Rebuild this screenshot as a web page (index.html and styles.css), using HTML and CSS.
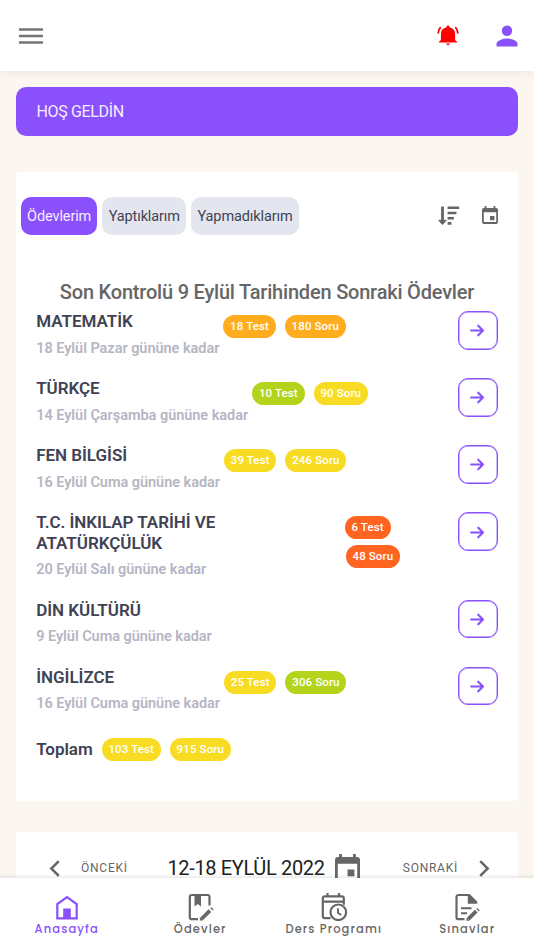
FILE: index.html
```html
<!DOCTYPE html>
<html lang="tr">
<head>
<meta charset="utf-8">
<meta name="viewport" content="width=device-width, initial-scale=1">
<title>Ödevler</title>
<link rel="stylesheet" href="styles.css">
</head>
<body>
<svg class="defs" aria-hidden="true">
  <symbol id="arrow" viewBox="0 0 16 14"><path d="M1.200 7h12.600M8.800 1.800 13.900 7l-5.100 5.200" fill="none" stroke="currentColor" stroke-width="2.300" stroke-linecap="round" stroke-linejoin="round"/></symbol>
  <symbol id="event" viewBox="3 1 18 20"><path d="M17 12h-5v5h5v-5zM16 1v2H8V1H6v2H5c-1.110 0-1.990.9-1.990 2L3 19a2 2 0 0 0 2 2h14c1.100 0 2-.9 2-2V5c0-1.100-.9-2-2-2h-1V1h-2zm3 18H5V8h14v11z" fill="currentColor"/></symbol>
</svg>
<div class="app">
  <header class="topbar">
    <svg class="menu" viewBox="0 0 24 16"><path d="M0 1.500h24M0 8h24M0 14.500h24" stroke="currentColor" stroke-width="2.700"/></svg>
    <div class="topbar-actions">
      <svg class="bell" viewBox="0 0 22 21"><path d="M11 .5c.9 0 1.500.6 1.500 1.500v.2c3.700.8 5.600 3.300 5.600 6.500v6.200l1.900 1.800v.9H2v-.9l1.900-1.800V8.700c0-3.200 1.900-5.700 5.600-6.500V2c0-.9.6-1.500 1.500-1.500z" fill="currentColor"/><path d="M9.200 18.600h3.600c-.2 1.100-.9 1.700-1.800 1.700s-1.600-.6-1.800-1.700z" fill="currentColor"/><path d="M3.700 2.100C2 3.600 1.200 5.700 1.100 8.500M18.300 2.100c1.700 1.500 2.500 3.600 2.600 6.400" fill="none" stroke="currentColor" stroke-width="1.900"/></svg>
      <svg class="user" viewBox="0 0 22 22"><circle cx="11" cy="5.700" r="5.200" fill="currentColor"/><path d="M.5 21.500v-2.700c0-3.500 7-5.400 10.500-5.400s10.500 1.900 10.500 5.400v2.700z" fill="currentColor"/></svg>
    </div>
  </header>

  <main class="content">
    <div class="welcome">HOŞ GELDİN</div>

    <section class="card homework">
      <div class="toolbar">
        <div class="tabs">
          <span class="tab tab-active">Ödevlerim</span>
          <span class="tab tab-done">Yaptıklarım</span>
          <span class="tab tab-missed">Yapmadıklarım</span>
        </div>
        <div class="tools">
          <svg class="sort" viewBox="0 0 22 20"><path d="M.8 14.300h7.400L4.500 18.600z" fill="currentColor" stroke="currentColor" stroke-width="1"/><path d="M4.500.5v15" stroke="currentColor" stroke-width="2.800"/><path d="M9.600 1.700h11.600M9.600 7h8.900M9.600 12.200h6.300M9.600 17.400h3.800" stroke="currentColor" stroke-width="2.600"/></svg>
          <svg class="date"><use href="#event"/></svg>
        </div>
      </div>
      <h1 class="heading">Son Kontrolü 9 Eylül Tarihinden Sonraki Ödevler</h1>
      <div class="rows">
        <article class="row">
          <div class="info"><h2>MATEMATİK</h2><p>18 Eylül Pazar gününe kadar</p></div>
          <div class="badges"><span class="badge orange">18 Test</span><span class="badge orange">180 Soru</span></div>
          <a class="go"><svg><use href="#arrow"/></svg></a>
        </article>
        <article class="row">
          <div class="info"><h2>TÜRKÇE</h2><p>14 Eylül Çarşamba gününe kadar</p></div>
          <div class="badges"><span class="badge green">10 Test</span><span class="badge yellow">90 Soru</span></div>
          <a class="go"><svg><use href="#arrow"/></svg></a>
        </article>
        <article class="row">
          <div class="info"><h2>FEN BİLGİSİ</h2><p>16 Eylül Cuma gününe kadar</p></div>
          <div class="badges"><span class="badge yellow">39 Test</span><span class="badge yellow">246 Soru</span></div>
          <a class="go"><svg><use href="#arrow"/></svg></a>
        </article>
        <article class="row row-long">
          <div class="info"><h2>T.C. İNKILAP TARİHİ VE<br>ATATÜRKÇÜLÜK</h2><p>20 Eylül Salı gününe kadar</p></div>
          <div class="badges"><span class="badge red">6 Test</span><span class="badge red">48 Soru</span></div>
          <a class="go"><svg><use href="#arrow"/></svg></a>
        </article>
        <article class="row">
          <div class="info"><h2>DİN KÜLTÜRÜ</h2><p>9 Eylül Cuma gününe kadar</p></div>
          <a class="go"><svg><use href="#arrow"/></svg></a>
        </article>
        <article class="row">
          <div class="info"><h2>İNGİLİZCE</h2><p>16 Eylül Cuma gününe kadar</p></div>
          <div class="badges"><span class="badge yellow">25 Test</span><span class="badge green">306 Soru</span></div>
          <a class="go"><svg><use href="#arrow"/></svg></a>
        </article>
      </div>
      <div class="total">
        <h2>Toplam</h2>
        <span class="badge yellow">103 Test</span><span class="badge yellow">915 Soru</span>
      </div>
    </section>

    <section class="card week">
      <div class="week-nav"><svg class="chevron" viewBox="0 0 10 16"><path d="M9 1 2 8l7 7" fill="none" stroke="currentColor" stroke-width="2.400"/></svg><span>ÖNCEKİ</span></div>
      <div class="week-title"><span>12-18 EYLÜL 2022</span><svg class="week-date"><use href="#event"/></svg></div>
      <div class="week-nav"><span>SONRAKİ</span><svg class="chevron" viewBox="0 0 10 16"><path d="m1 1 7 7-7 7" fill="none" stroke="currentColor" stroke-width="2.400"/></svg></div>
    </section>
  </main>

  <nav class="bottom-nav">
    <a class="nav-item nav-active">
      <svg viewBox="0 0 28 28"><path d="M4.300 25.300V11L14 4l9.700 7v14.300z" fill="none" stroke="currentColor" stroke-width="2.200"/><path d="M10.200 15.600h7.600v9.700h-7.600z" fill="currentColor"/></svg>
      <span>Anasayfa</span>
    </a>
    <a class="nav-item">
      <svg viewBox="0 0 28 28"><path d="M12 26.200H5.800a2 2 0 0 1-2-2V4a2 2 0 0 1 2-2h15.700a2 2 0 0 1 2 2v8.500" fill="none" stroke="currentColor" stroke-width="2.200"/><path d="M8.500 2h6.500v11.500l-3.200-2.400-3.300 2.400z" fill="currentColor"/><path d="m15.500 26 8.400-8.300" stroke="currentColor" stroke-width="3.800"/><path d="m24.300 15.200 2.400 2.400 1-1-2.400-2.400zM13.800 24.300v3.200H17z" fill="currentColor"/></svg>
      <span>Ödevler</span>
    </a>
    <a class="nav-item">
      <svg viewBox="0 0 28 28"><path d="M10.500 25.200H4.800a2 2 0 0 1-2-2V5.300a2 2 0 0 1 2-2h17a2 2 0 0 1 2 2v6.500M2.800 8.700h21M7.500 0v4M19 0v4" fill="none" stroke="currentColor" stroke-width="2.200"/><circle cx="18.300" cy="19.300" r="7.800" fill="none" stroke="currentColor" stroke-width="2.200"/><path d="M18 15.200v4.800l3.200 2" fill="none" stroke="currentColor" stroke-width="1.900"/></svg>
      <span>Ders Programı</span>
    </a>
    <a class="nav-item">
      <svg viewBox="0 0 28 28"><path d="M11.500 26.200H5.500a2 2 0 0 1-2-2V4a2 2 0 0 1 2-2h10.500l6.500 7" fill="none" stroke="currentColor" stroke-width="2.200"/><path d="M14.800 1.500h2.200l7.300 7.300v2H14.800z" fill="currentColor"/><path d="M8 15.200h10.500M8 20.300h6" stroke="currentColor" stroke-width="2.100"/><path d="m15.200 26.200 8-8" stroke="currentColor" stroke-width="3.800"/><path d="m23.300 16 2.400 2.400 1-1-2.400-2.400zM13.500 24.500v3.200h3.200z" fill="currentColor"/></svg>
      <span>Sınavlar</span>
    </a>
  </nav>
</div>
</body>
</html>
```
FILE: styles.css
```css
* { box-sizing: border-box; }
body { margin: 0; font-family: Roboto, "Liberation Sans", sans-serif; background: #fbf6f0; color: #3f4254; }
h1, h2, p { margin: 0; }
svg { display: block; flex: none; }
.defs { display: none; }
.app { height: 950px; display: flex; flex-direction: column; overflow: hidden; }

.topbar { position: relative; z-index: 1; flex: none; height: 71px; padding: 0 16px 0 19px; background: #fff; display: flex; align-items: center; justify-content: space-between; box-shadow: 0 2px 8px rgba(80, 60, 40, .07); color: #757575; }
.menu { width: 24px; height: 16px; margin-top: 1px; }
.topbar-actions { display: flex; align-items: center; gap: 37px; }
.bell { width: 22px; height: 21px; color: #f00; }
.user { width: 22px; height: 22px; color: #8950fc; margin-top: 1px; }

.content { flex: 1; min-height: 0; overflow: hidden; padding: 16px 16px 0; display: flex; flex-direction: column; }
.welcome { flex: none; height: 49px; border-radius: 10px; background: #8950fc; color: #f4eeff; padding-left: 20.500px; line-height: 49px; font-size: 16px; letter-spacing: -.35px; }
.card { flex: none; background: #fff; border-radius: 4px; }
.homework { height: 629px; margin-top: 36px; padding-top: 25px; }
.toolbar { display: flex; justify-content: space-between; align-items: center; padding: 0 20px 0 5px; }
.tabs { display: flex; gap: 5px; }
.tab { height: 38px; line-height: 39px; border-radius: 10px; background: #e4e6ef; font-size: 14.500px; letter-spacing: -.12px; text-align: center; white-space: nowrap; }
.tab-active { width: 76.300px; background: #8950fc; color: #f4eeff; }
.tab-done { width: 84px; }
.tab-missed { width: 107.500px; }
.tools { display: flex; align-items: center; gap: 22px; color: #666; }
.sort { width: 22px; height: 20px; }
.date { width: 16px; height: 18px; margin-top: -2px; }
.heading { margin-top: 44px; height: 27px; line-height: 27px; text-align: center; font-size: 20px; letter-spacing: -.2px; font-weight: 500; color: #666; white-space: nowrap; }

.rows { margin-top: 5px; padding: 0 20px 0 20.200px; }
.row { height: 67.100px; display: flex; align-items: flex-start; }
.row-long { height: 87.600px; }
.info { flex: none; white-space: nowrap; }
h2 { font-size: 17px; line-height: 20.500px; letter-spacing: -.03px; font-weight: 600; color: #3f4254; }
.info p { margin-top: 6px; font-size: 14.500px; line-height: 21px; letter-spacing: -.04px; font-weight: 600; color: #b5b5c3; }
.badges { display: flex; gap: 9px; padding: 4px 0 0 4px; }
.badge { height: 23px; line-height: 22px; border-radius: 12px; padding: 0 6.800px; font-size: 11.500px; font-weight: 500; letter-spacing: .12px; color: #fff; white-space: nowrap; }
.row-long .info { width: 304.500px; }
.row-long .badges { flex-direction: column; align-items: flex-start; gap: 5.500px; }
.row-long .badge:last-child { margin-left: 1px; }
.orange { background: #ffad1f; }
.green { background: #b4d41c; }
.yellow { background: #f8dc23; }
.red { background: #ff6420; }
.go { margin-left: auto; width: 40.500px; height: 38.500px; border: 1px solid #8950fc; box-shadow: inset 0 0 0 .4px #8950fc; border-radius: 10px; display: grid; place-items: center; color: #8950fc; }
.go svg { width: 15px; height: 13px; margin-top: 1px; }
.total { display: flex; align-items: center; gap: 9px; padding: 4px 20px 0 20.200px; }

.week { height: 90px; margin-top: 31px; padding: 0 28px 0 33px; display: flex; align-items: flex-start; justify-content: space-between; }
.week-nav { display: flex; align-items: center; gap: 21px; height: 72px; color: #666; font-size: 12px; letter-spacing: .75px; }
.chevron { width: 11px; height: 17px; }
.week-title { display: flex; align-items: center; gap: 10.500px; height: 72px; margin-right: 3px; color: #212121; font-size: 20px; letter-spacing: -.35px; white-space: nowrap; }
.week-date { width: 25px; height: 28px; color: #666; }

.bottom-nav { position: relative; flex: none; height: 72px; background: #fff; display: grid; grid-template-columns: repeat(4, 1fr); box-shadow: 0 -1px 4px rgba(0, 0, 0, .12); }
.nav-item { display: flex; flex-direction: column; align-items: center; padding-top: 15px; color: #666; font-family: Poppins, Lato, sans-serif; font-size: 11.500px; font-weight: 500; letter-spacing: 1.100px; line-height: 16px; white-space: nowrap; }
.nav-item svg { width: 28px; height: 28px; }
.nav-active { color: #8950fc; }
```
